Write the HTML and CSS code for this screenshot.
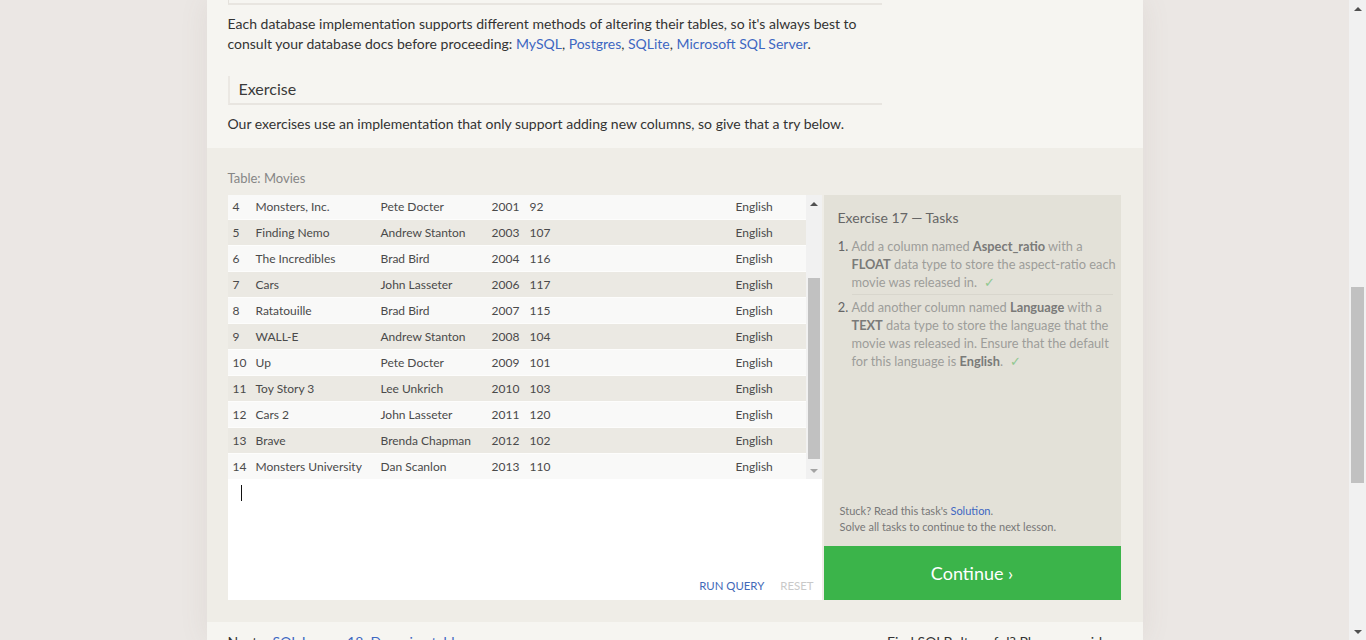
FILE: index.html
```html
<!DOCTYPE html>
<html lang="en">
<head>
<meta charset="utf-8">
<title>SQL Lesson 17: Altering tables</title>
<link rel="stylesheet" href="styles.css">
</head>
<body>
<div class="window">
  <div class="page">
    <main class="column">
      <section class="lesson">
        <div class="prev-box"></div>
        <p class="text">Each database implementation supports different methods of altering their tables, so it's always best to consult your database docs before proceeding: <a href="#">MySQL</a>, <a href="#">Postgres</a>, <a href="#">SQLite</a>, <a href="#">Microsoft SQL Server</a>.</p>
        <h3 class="section-title">Exercise</h3>
        <p class="text">Our exercises use an implementation that only support adding new columns, so give that a try below.</p>
      </section>

      <section class="exercise">
        <div class="table-label">Table: Movies</div>
        <div class="ex-grid">
          <div class="ex-left">
            <div class="table-wrap">
              <div class="rows">
                <div class="row"><span>4</span><span>Monsters, Inc.</span><span>Pete Docter</span><span>2001</span><span>92</span><span>English</span></div>
                <div class="row alt"><span>5</span><span>Finding Nemo</span><span>Andrew Stanton</span><span>2003</span><span>107</span><span>English</span></div>
                <div class="row"><span>6</span><span>The Incredibles</span><span>Brad Bird</span><span>2004</span><span>116</span><span>English</span></div>
                <div class="row alt"><span>7</span><span>Cars</span><span>John Lasseter</span><span>2006</span><span>117</span><span>English</span></div>
                <div class="row"><span>8</span><span>Ratatouille</span><span>Brad Bird</span><span>2007</span><span>115</span><span>English</span></div>
                <div class="row alt"><span>9</span><span>WALL-E</span><span>Andrew Stanton</span><span>2008</span><span>104</span><span>English</span></div>
                <div class="row"><span>10</span><span>Up</span><span>Pete Docter</span><span>2009</span><span>101</span><span>English</span></div>
                <div class="row alt"><span>11</span><span>Toy Story 3</span><span>Lee Unkrich</span><span>2010</span><span>103</span><span>English</span></div>
                <div class="row"><span>12</span><span>Cars 2</span><span>John Lasseter</span><span>2011</span><span>120</span><span>English</span></div>
                <div class="row alt"><span>13</span><span>Brave</span><span>Brenda Chapman</span><span>2012</span><span>102</span><span>English</span></div>
                <div class="row"><span>14</span><span>Monsters University</span><span>Dan Scanlon</span><span>2013</span><span>110</span><span>English</span></div>
              </div>
              <div class="vscroll small">
                <div class="arrow up"></div>
                <div class="track"><div class="thumb"></div></div>
                <div class="arrow down dim"></div>
              </div>
            </div>
            <div class="editor">
              <div class="caret"></div>
              <div class="actions">
                <a href="#" class="run">RUN QUERY</a>
                <a href="#" class="reset">RESET</a>
              </div>
            </div>
          </div>

          <div class="ex-right">
            <div class="tasks">
              <div class="tasks-title">Exercise 17 — Tasks</div>
              <ol class="task-list">
                <li>Add a column named <b>Aspect_ratio</b> with a <b>FLOAT</b> data type to store the aspect-ratio each movie was released in. <span class="check">✓</span></li>
                <li>Add another column named <b>Language</b> with a <b>TEXT</b> data type to store the language that the movie was released in. Ensure that the default for this language is <b>English</b>. <span class="check">✓</span></li>
              </ol>
              <div class="stuck">
                <div>Stuck? Read this task's <a href="#">Solution</a>.</div>
                <div>Solve all tasks to continue to the next lesson.</div>
              </div>
            </div>
            <a href="#" class="continue">Continue ›</a>
          </div>
        </div>
      </section>

      <section class="footer-nav">
        <div>Next – <a href="#">SQL Lesson 18: Dropping tables</a></div>
        <div class="footer-right">Find SQLBolt useful? Please consider</div>
      </section>
    </main>
  </div>

  <div class="vscroll page-scroll">
    <div class="arrow up"></div>
    <div class="track"><div class="thumb"></div></div>
    <div class="arrow down"></div>
  </div>
</div>
</body>
</html>
```

FILE: styles.css
```css
* { box-sizing: border-box; }

html, body {
  margin: 0;
  padding: 0;
  height: 640px;
  overflow: hidden;
}

body {
  background: #ebe7e4;
  font-family: "Lato", "Open Sans", sans-serif;
  color: #333;
}

a { color: #3d67c2; text-decoration: none; }

.window {
  display: flex;
  height: 640px;
}

.page {
  flex: 1;
  display: flex;
  justify-content: center;
  overflow: hidden;
}

.column {
  width: 936px;
  background: #f6f5f1;
  box-shadow: 0 0 28px rgba(120, 100, 90, 0.09);
  display: flex;
  flex-direction: column;
}

/* Lesson text */
.lesson {
  padding: 0 261px 14px 21px;
}

.prev-box {
  height: 5px;
  border-left: 1px solid #e4e1dc;
  border-bottom: 2px solid #e8e5e0;
}

.text {
  margin: 9px 0 0;
  font-size: 14px;
  line-height: 20px;
}

.section-title {
  margin: 22px 0 0;
  height: 29px;
  padding: 3px 0 0 9px;
  font-size: 16px;
  font-weight: 400;
  line-height: 20px;
  color: #3a3a3a;
  border-left: 2px solid #ebe8e3;
  border-bottom: 2px solid #e8e5e0;
}

/* Exercise */
.exercise {
  background: #efede7;
  padding: 21px 22px 22px 21px;
}

.table-label {
  font-size: 13px;
  line-height: 18px;
  color: #868686;
  margin-bottom: 8px;
}

.ex-grid {
  display: flex;
  gap: 2px;
}

.ex-left {
  width: 594px;
  display: flex;
  flex-direction: column;
}

.table-wrap {
  height: 284px;
  display: flex;
  overflow: hidden;
  background: #fff;
}

.rows {
  width: 578px;
  margin-top: -1px;
}

.row {
  display: grid;
  grid-template-columns: 23px 125px 111px 38px 206px 1fr;
  padding-left: 5px;
  height: 26px;
  align-items: center;
  font-size: 12px;
  color: #4a4a4a;
  background: #f9f9f8;
  border-bottom: 1px solid #fdfdfc;
  white-space: nowrap;
}

.row.alt { background: #ebe9e3; }

/* Scrollbars */
.vscroll {
  display: flex;
  flex-direction: column;
  background: #f1f1f1;
}

.vscroll.small { width: 16px; }

.vscroll .arrow {
  height: 17px;
  display: flex;
  align-items: center;
  justify-content: center;
}

.vscroll .arrow::before {
  content: "";
  border-left: 4px solid transparent;
  border-right: 4px solid transparent;
}

.vscroll .arrow.up::before { border-bottom: 4px solid #505050; }
.vscroll .arrow.down::before { border-top: 4px solid #505050; }
.vscroll .arrow.down.dim::before { border-top-color: #a3a3a3; }

.vscroll .track {
  flex: 1;
  display: flex;
  flex-direction: column;
  padding: 0 2px;
}

.vscroll.small .track { padding: 66px 2px 3px; }
.vscroll.small .thumb { height: 181px; background: #c1c1c1; }

.page-scroll {
  width: 17px;
}

.page-scroll .track { padding: 270px 2px 0; }
.page-scroll .thumb { height: 196px; background: #c1c1c1; }

/* Editor */
.editor {
  height: 121px;
  background: #fff;
  display: flex;
  flex-direction: column;
  justify-content: space-between;
  padding: 6px 8px 6px 13px;
}

.caret {
  width: 1px;
  height: 16px;
  background: #111;
}

.actions {
  display: flex;
  justify-content: flex-end;
  gap: 16px;
  font-size: 11.4px;
  line-height: 16px;
}

.actions .run { color: #4369b8; }
.actions .reset { color: #c9c9c9; }

/* Tasks panel */
.ex-right {
  width: 297px;
  display: flex;
  flex-direction: column;
}

.tasks {
  height: 351px;
  background: #e3e1d8;
  padding: 13px 4px 11px 14px;
  display: flex;
  flex-direction: column;
}

.tasks-title {
  font-size: 14px;
  line-height: 20px;
  color: #666;
}

.task-list {
  margin: 9px 0 0;
  padding: 0 0 0 14px;
  font-size: 12.8px;
  line-height: 18px;
  color: #9d9d9a;
}

.task-list li { padding: 0 0 3px; }
.task-list li + li {
  border-top: 1px solid #d8d6cd;
  padding-top: 3px;
  margin-right: 4px;
}

.task-list li::marker { color: #666; }
.task-list b { color: #7a7a78; font-weight: 700; }

.check {
  color: #90c890;
  margin-left: 4px;
}

.stuck {
  margin-top: auto;
  font-size: 11px;
  line-height: 16px;
  color: #777;
  padding-left: 2px;
}

.continue {
  height: 54px;
  background: #3bb44a;
  color: #fff;
  font-size: 18px;
  display: flex;
  align-items: center;
  justify-content: center;
}

/* Footer */
.footer-nav {
  display: flex;
  justify-content: space-between;
  padding: 10px 22px 0 21px;
  font-size: 14px;
  line-height: 20px;
}

.footer-right { padding-right: 6px; }
```
